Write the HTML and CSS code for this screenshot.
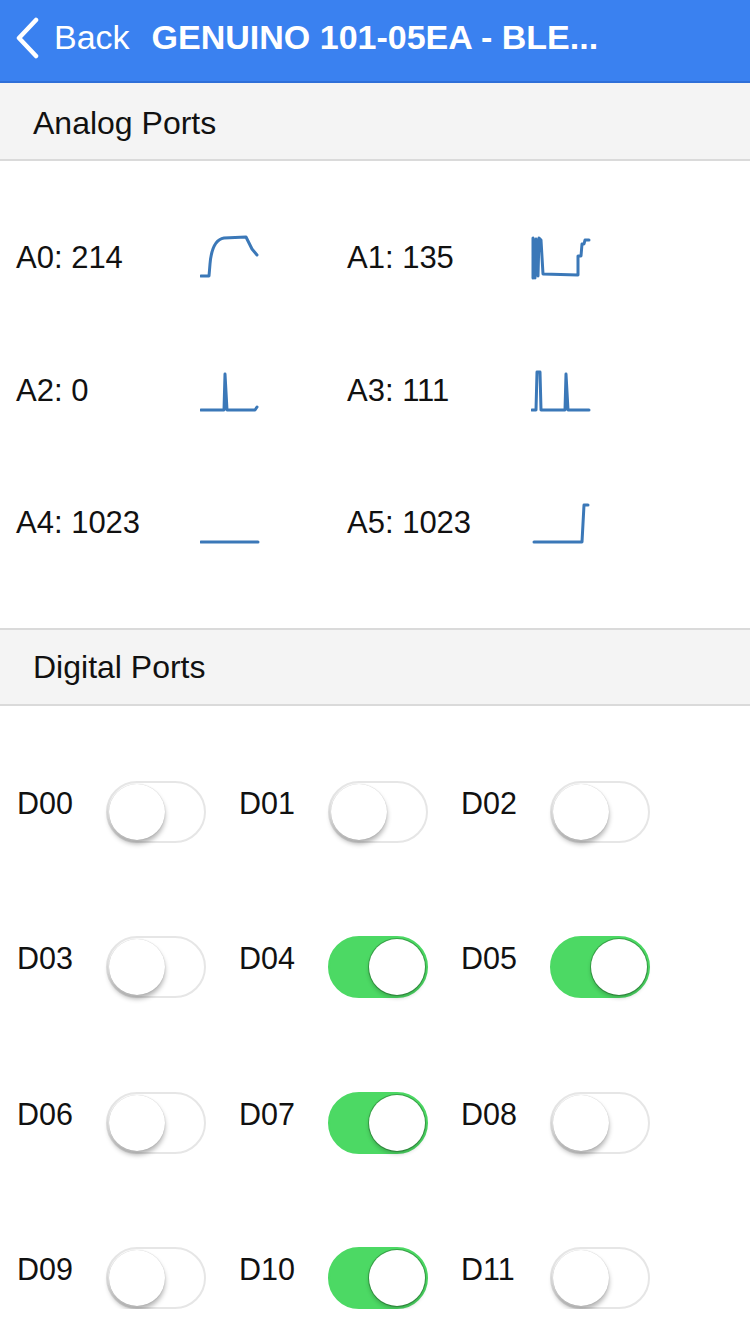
FILE: index.html
```html
<!DOCTYPE html>
<html>
<head>
<meta charset="utf-8">
<link rel="stylesheet" href="styles.css">
</head>
<body>
<div class="navbar">
  <div class="back">
    <svg class="chevron" width="26" height="42" viewBox="0 0 26 42"><path d="M22 3 L5 21 L22 39" fill="none" stroke="#fff" stroke-width="4.5" stroke-linecap="round" stroke-linejoin="round"/></svg>
    <span class="back-text">Back</span>
  </div>
  <div class="title">GENUINO 101-05EA - BLE...</div>
</div>

<div class="section-head first">Analog Ports</div>
<div class="analog">
  <div class="cell"><span class="alabel">A0: 214</span>
    <svg class="spark" width="60" height="50" viewBox="0 0 60 50"><path d="M1 42 L9 42 L10 30 Q12 6 24 4 L46 3 L52 15 L57 21"/></svg></div>
  <div class="cell"><span class="alabel">A1: 135</span>
    <svg class="spark" width="60" height="50" viewBox="0 0 60 50"><path d="M2 44 L2 4 L4 44 L5 5 L7 42 L8 4 L10 6 L12 40 L47 41 L47 22 L50 22 L51 10 L53 10 L54 6 L58 6"/></svg></div>
  <div class="cell"><span class="alabel">A2: 0</span>
    <svg class="spark" width="60" height="50" viewBox="0 0 60 50"><path d="M1 43 L24 43 L25 7 L27 43 L55 43 L57 40"/></svg></div>
  <div class="cell"><span class="alabel">A3: 111</span>
    <svg class="spark" width="60" height="50" viewBox="0 0 60 50"><path d="M1 43 L5 43 L6 5 L9 5 L10 43 L34 43 L35 7 L37 43 L58 43"/></svg></div>
  <div class="cell"><span class="alabel">A4: 1023</span>
    <svg class="spark" width="60" height="50" viewBox="0 0 60 50"><path d="M1 43 L58 43"/></svg></div>
  <div class="cell"><span class="alabel">A5: 1023</span>
    <svg class="spark" width="60" height="50" viewBox="0 0 60 50"><path d="M3 43 L51 43 L53 6 L57 6"/></svg></div>
</div>

<div class="section-head second">Digital Ports</div>
<div class="digital">
  <div class="dcell"><span class="dlabel">D00</span><div class="toggle"><div class="knob"></div></div></div>
  <div class="dcell"><span class="dlabel">D01</span><div class="toggle"><div class="knob"></div></div></div>
  <div class="dcell"><span class="dlabel">D02</span><div class="toggle"><div class="knob"></div></div></div>
  <div class="dcell"><span class="dlabel">D03</span><div class="toggle"><div class="knob"></div></div></div>
  <div class="dcell"><span class="dlabel">D04</span><div class="toggle on"><div class="knob"></div></div></div>
  <div class="dcell"><span class="dlabel">D05</span><div class="toggle on"><div class="knob"></div></div></div>
  <div class="dcell"><span class="dlabel">D06</span><div class="toggle"><div class="knob"></div></div></div>
  <div class="dcell"><span class="dlabel">D07</span><div class="toggle on"><div class="knob"></div></div></div>
  <div class="dcell"><span class="dlabel">D08</span><div class="toggle"><div class="knob"></div></div></div>
  <div class="dcell"><span class="dlabel">D09</span><div class="toggle"><div class="knob"></div></div></div>
  <div class="dcell"><span class="dlabel">D10</span><div class="toggle on"><div class="knob"></div></div></div>
  <div class="dcell"><span class="dlabel">D11</span><div class="toggle"><div class="knob"></div></div></div>
</div>
</body>
</html>
```
FILE: styles.css
```css
html, body {
  margin: 0;
  padding: 0;
  background: #fff;
  font-family: "Liberation Sans", Arial, Helvetica, sans-serif;
  color: #111;
  overflow: hidden;
}
.navbar {
  height: 81px;
  background: #3a81f0;
  border-bottom: 2px solid #2f6fd8;
  display: flex;
  align-items: center;
  color: #fff;
  box-sizing: border-box;
  height: 83px;
  padding-bottom: 8px;
}
.back {
  display: flex;
  align-items: center;
  padding-left: 14px;
}
.chevron {
  display: block;
  margin-top: 2px;
}
.back-text {
  font-size: 34px;
  margin-left: 14px;
  line-height: 40px;
}
.title {
  font-size: 34px;
  font-weight: bold;
  margin-left: 22px;
  line-height: 40px;
}
.section-head {
  background: #f4f4f4;
  height: 76px;
  border-bottom: 2px solid #dadada;
  display: flex;
  align-items: center;
  padding-left: 33px;
  font-size: 32px;
  color: #111;
  box-sizing: border-box;
  height: 78px;
  padding-top: 4px;
}
.section-head.second {
  border-top: 2px solid #dadada;
  height: 78px;
  padding-top: 2px;
}
.analog {
  display: grid;
  grid-template-columns: 331px 331px;
  grid-auto-rows: 132.5px;
  padding: 31px 0 38px 16px;
}
.cell {
  display: flex;
  align-items: center;
}
.alabel {
  width: 184px;
  font-size: 31px;
  line-height: 36px;
}
.spark {
  display: block;
  margin-top: 2px;
}
.spark path {
  fill: none;
  stroke: #3b78b8;
  stroke-width: 3;
  stroke-linejoin: round;
  stroke-linecap: round;
}
.digital {
  display: grid;
  grid-template-columns: 222px 222px 222px;
  row-gap: 93.5px;
  padding: 75px 0 0 17px;
}
.dcell {
  display: flex;
  align-items: flex-start;
}
.dlabel {
  width: 89px;
  font-size: 30.5px;
  line-height: 36px;
  margin-top: 4px;
}
.toggle {
  width: 100px;
  height: 62px;
  box-sizing: border-box;
  border-radius: 31px;
  border: 2px solid #e6e6e6;
  background: #fff;
  display: flex;
  align-items: center;
  justify-content: flex-start;
  padding: 0 1px;
}
.toggle.on {
  background: #4cd964;
  border-color: #4cd964;
  justify-content: flex-end;
}
.knob {
  width: 56px;
  height: 56px;
  border-radius: 50%;
  background: #fff;
  box-shadow: 0 4px 5px rgba(0, 0, 0, 0.3), 0 0 1px rgba(0, 0, 0, 0.25);
}
.toggle.on .knob {
  box-shadow: 0 3px 4px rgba(0, 0, 0, 0.22), 0 0 0 1px rgba(40, 120, 50, 0.55);
}
```
